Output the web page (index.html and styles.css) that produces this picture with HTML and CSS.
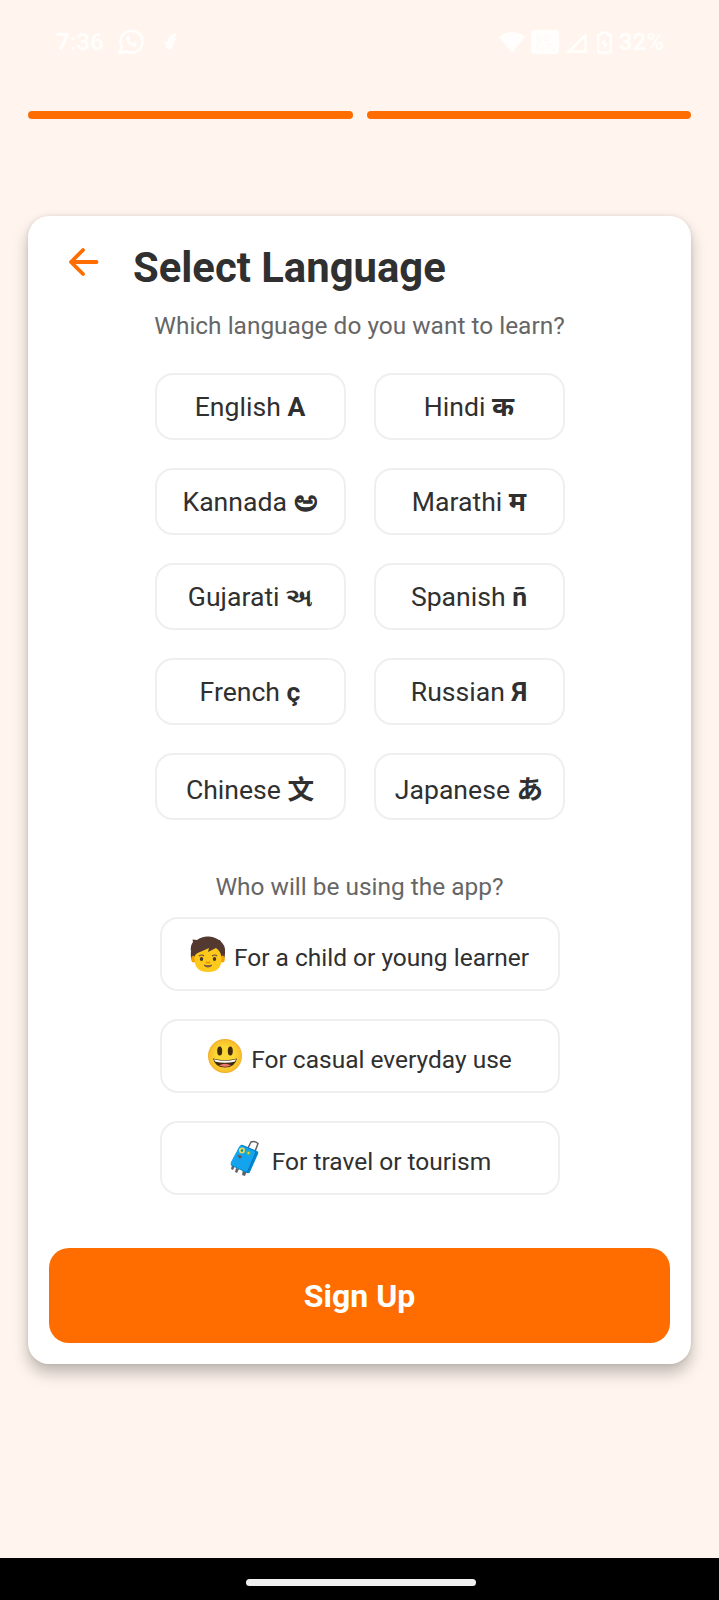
FILE: index.html
```html
<!DOCTYPE html>
<html lang="en">
<head>
<meta charset="utf-8">
<title>Select Language</title>
<link rel="stylesheet" href="styles.css">
</head>
<body>
<div class="screen">
  <header class="status">
    <div class="status-left">
      <span class="clock">7:36</span>
      <svg class="chat" width="26" height="26" viewBox="0 0 26 26" fill="none" stroke="currentColor" stroke-width="2.6"><path d="M2 24l1.700-6.200A11 11 0 1 1 8 22.300z"/><path d="M8.300 7.800c-1.200 5 5 11 10 9.500l.7-2.800-3-1.500-1.600 1.500c-1.700-.8-2.800-2-3.600-3.700l1.500-1.500-1.200-3z" fill="currentColor" stroke="none"/></svg>
      <svg width="15" height="18" viewBox="0 0 15 18" fill="currentColor"><path d="M14 0C8 1 5 4 5 8L1 9 4 16q3 1 5 0l2-7 2-2-1-3z"/></svg>
    </div>
    <div class="status-right">
      <svg class="wifi" width="26" height="21" viewBox="0 0 26 21" fill="currentColor"><path d="M0 4.500Q13-4.500 26 4.500L13 21z"/></svg>
      <svg class="volte" width="28" height="24" viewBox="0 0 28 24"><rect width="28" height="24" rx="4" fill="currentColor"/><path d="M5 6l3 5 3-5M14 6h4v5h-4zM6 14v5h4M15 14h7M18 14v5" fill="none" stroke="#fff8f2" stroke-width="1.200"/></svg>
      <svg class="signal" width="21" height="21" viewBox="0 0 21 21" fill="none" stroke="currentColor" stroke-width="2.500"><path d="M3 19.500L19.500 3v16.500z"/></svg>
      <svg class="battery" width="15" height="23" viewBox="0 0 15 23"><path d="M4.500 1.500h6v2H13q.8 0 .8 1V20q0 1.500-1.500 1.500h-9.500Q1.300 21.500 1.300 20V4.500q0-1 .8-1h2.400z" fill="none" stroke="currentColor" stroke-width="2.400"/><path d="M8.500 6l-4.500 7h3v6l4-7H8z" fill="currentColor"/></svg>
      <span class="percent">32%</span>
    </div>
  </header>
  <div class="progress"><span class="step"></span><span class="step"></span></div>

  <main class="card">
    <div class="heading">
      <svg class="back" width="30" height="28" viewBox="0 0 30 28" fill="none" stroke="#ff6d00" stroke-width="3.800" stroke-linecap="round" stroke-linejoin="round"><path d="M27.500 14H2M14 2L2 14l12 12"/></svg>
      <h1 class="title">Select Language</h1>
    </div>
    <p class="prompt">Which language do you want to learn?</p>
    <div class="languages">
      <button class="lang">English <b>A</b></button>
      <button class="lang">Hindi <b>क</b></button>
      <button class="lang">Kannada <b class="kannada">ಅ</b></button>
      <button class="lang">Marathi <b>म</b></button>
      <button class="lang">Gujarati <b class="gujarati">અ</b></button>
      <button class="lang">Spanish <b>ñ</b></button>
      <button class="lang">French <b>ç</b></button>
      <button class="lang">Russian <b>Я</b></button>
      <button class="lang tall">Chinese <b lang="zh">文</b></button>
      <button class="lang tall">Japanese <b lang="ja">あ</b></button>
    </div>
    <p class="prompt who">Who will be using the app?</p>
    <div class="uses">
      <button class="use">
        <svg class="emoji" width="36" height="36" viewBox="0 0 36 36"><path d="M3 26Q0 22 1 15q-1-5 2-9L2.500 3.500 7 4Q12 0 19 .5t11 4.500q6 4 5 12 0 6-3 9z" fill="#543930"/><ellipse cx="4" cy="23" rx="2.800" ry="3.600" fill="#f4a000"/><ellipse cx="32" cy="23" rx="2.800" ry="3.600" fill="#f4a000"/><path d="M4.500 17Q5 8 18 8t13.500 9v6q0 13-13.500 13T4.500 23z" fill="#fdc91b"/><path d="M4 21L2 12 10 4h20l4 9-2.500 8q-1-6-5.500-9l-8 4 1-4-9 4q-4 1-6 5z" fill="#543930"/><path d="M9 20q3-2 5 0M22 20q3-2 5 0" fill="none" stroke="#6d4c41" stroke-width="1.200"/><ellipse cx="11.500" cy="23" rx="1.700" ry="2" fill="#49362f"/><ellipse cx="24.500" cy="23" rx="1.700" ry="2" fill="#49362f"/><path d="M16 26q2 1.500 4 0" fill="none" stroke="#e59600" stroke-width="1.600"/><path d="M14 29.200q4 1.400 8 0-4 3.600-8 0z" fill="#795548" stroke="#795548"/></svg>
        <span>For a child or young learner</span>
      </button>
      <button class="use">
        <svg class="emoji" width="36" height="36" viewBox="0 0 36 36"><defs><radialGradient id="face"><stop offset=".5" stop-color="#fdd835"/><stop offset=".92" stop-color="#f7c02b"/><stop offset="1" stop-color="#f4a223"/></radialGradient></defs><circle cx="18" cy="18" r="17" fill="url(#face)"/><ellipse cx="12.700" cy="13" rx="2.500" ry="4.600" fill="#422b0d"/><ellipse cx="23.300" cy="13" rx="2.500" ry="4.600" fill="#422b0d"/><path d="M6 20.500q12 3.500 24 0-2 9-12 9T6 20.500z" fill="#422b0d"/><path d="M7 21.300q11 3 22 0l-1 2.200q-10 2.500-20 0z" fill="#fff"/><path d="M12 27.300q6-3 12 0-6 3-12 0z" fill="#ed7770"/></svg>
        <span>For casual everyday use</span>
      </button>
      <button class="use">
        <svg class="emoji" width="36" height="36" viewBox="0 0 36 36"><path d="M20 8l3-6q4-1.500 7 1.500l-3 8" fill="none" stroke="#616161" stroke-width="1.500"/><path d="M4 25l-1 4 2 1 2-4M8 28l-1 4 2 1 2-4M15 29l-1 6 3 1 2-5M20 28l-1 4 2 1 2-5" fill="#616161"/><path d="M12 6q1-2 3-1l14 6q2 1 1 3l-8 18q-1 2-3 1L4 26q-2-1-1-3z" fill="#0288d1"/><path d="M11 7q1-2 3-1l12 5q2 1 1 3l-7 16q-1 2-3 1L4 25q-2-1-1-3z" fill="#14a4ee"/><path d="M28 12l-9 21" fill="none" stroke="#0277bd"/><circle cx="14" cy="10.500" r="3" fill="#e9d758"/><circle cx="14" cy="10.500" r="1.200" fill="#009688"/><circle cx="20.500" cy="13" r="2.200" fill="#4db56a"/><circle cx="20.500" cy="13" r="1" fill="#ffd54f"/><path d="M9 15l5 1-2 3z" fill="#754b45"/></svg>
        <span>For travel or tourism</span>
      </button>
    </div>
    <button class="signup"><span>Sign Up</span></button>
  </main>
  <footer class="navbar"><span class="pill"></span></footer>
</div>
</body>
</html>
```
FILE: styles.css
```css
* { box-sizing: border-box; }
body { margin: 0; }
button { font: inherit; color: inherit; background: none; border: 0; padding: 0; }

.screen {
  width: 719px;
  height: 1600px;
  display: flex;
  flex-direction: column;
  overflow: hidden;
  background: #fff5ee;
  color: #303030;
  font-family: Roboto, "Noto Sans", "Noto Sans CJK SC", sans-serif;
}

.status {
  height: 111px;
  padding: 28px 55px 0 56px;
  display: flex;
  justify-content: space-between;
  align-items: flex-start;
  color: #fffefc;
  font-size: 24px;
  line-height: 28px;
  font-weight: 600;
}
.status-left, .status-right { display: flex; align-items: center; }
.chat { margin: 0 19px 0 14px; }
.wifi { margin-right: 6px; }
.volte { margin-right: 7px; }
.signal { margin-right: 10px; }
.battery { margin-right: 7px; }

.progress { display: flex; gap: 14px; padding: 0 28px; }
.step { flex: 1; height: 8px; border-radius: 4px; background: #ff6d00; }

.card {
  margin: 97px 28px 0;
  height: 1148px;
  padding: 0 21px 21px;
  display: flex;
  flex-direction: column;
  align-items: center;
  border-radius: 21px;
  background: #fff;
  box-shadow: 0 9px 15px rgba(0, 0, 0, .25), 0 0 4px rgba(0, 0, 0, .1);
}
.heading { align-self: stretch; display: flex; align-items: flex-start; padding: 27px 0 0 20px; }
.back { margin-top: 5px; }
.title { margin: 0 0 0 34px; font-size: 41.800px; line-height: 50px; font-weight: 700; }
.prompt { margin: 18px 0 0; font-size: 24.450px; line-height: 30px; color: #666; }

.languages {
  margin-top: 32px;
  display: grid;
  grid-template-columns: 191px 191px;
  grid-template-rows: repeat(5, 67px);
  gap: 28px;
}
.lang {
  border: 2px solid #efefef;
  border-radius: 18px;
  font-size: 26.600px;
  line-height: 32px;
  white-space: nowrap;
}
.tall { padding-top: 6px; }
.kannada {
  display: inline-block;
  font-size: 30px;
  font-weight: 400;
  line-height: 20px;
  padding: 0 2px;
  transform: scaleX(1.2);
  -webkit-text-stroke: 1.300px currentColor;
}
.gujarati { font-size: 24.500px; line-height: 20px; }

.who { margin-top: 52px; }
.uses { margin-top: 15px; display: flex; flex-direction: column; gap: 28px; }
.use {
  width: 400px;
  height: 74px;
  display: flex;
  align-items: center;
  justify-content: center;
  gap: 8px;
  border: 2px solid #efefef;
  border-radius: 18px;
  font-size: 24.500px;
  line-height: 30px;
}
.use span { margin-top: 8px; }

.signup {
  align-self: stretch;
  height: 95px;
  margin-top: auto;
  padding-top: 1px;
  border-radius: 20px;
  background: #ff6d00;
  color: #fff;
  font-size: 32px;
  font-weight: 700;
}

.navbar {
  height: 42px;
  margin-top: auto;
  padding: 7px 0 0 3px;
  display: flex;
  justify-content: center;
  align-items: center;
  background: #000;
}
.pill { width: 230px; height: 7px; border-radius: 3.500px; background: #f0f0f0; }
```
